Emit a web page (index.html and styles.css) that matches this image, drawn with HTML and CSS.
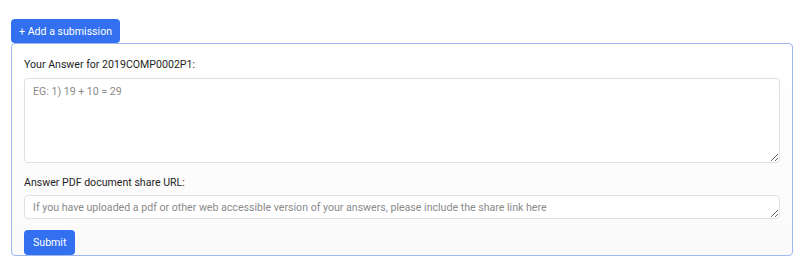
FILE: index.html
```html
<!DOCTYPE html>
<html lang="en">
<head>
  <meta charset="UTF-8">
  <title>Submission</title>
  <link rel="stylesheet" href="styles.css">
</head>
<body>
  <button class="add-btn" id="addBtn">+ Add a submission</button>

  <form class="submission-card" id="submissionForm">
    <div class="form-row">
      <label for="answer">Your Answer for 2019COMP0002P1:</label>
      <textarea id="answer" class="answer-box" placeholder="EG: 1) 19 + 10 = 29"></textarea>
    </div>

    <div class="form-row">
      <label for="shareUrl">Answer PDF document share URL:</label>
      <textarea id="shareUrl" class="url-box" placeholder="If you have uploaded a pdf or other web accessible version of your answers, please include the share link here"></textarea>
    </div>

    <button type="submit" class="submit-btn">Submit</button>
  </form>
</body>
</html>
```

FILE: styles.css
```css
/* page */
body {
  margin: 0;
  padding: 19px 13px 0 11px;
  font-family: Roboto, "Liberation Sans", Arial, sans-serif;
  font-size: 10.6px;
  color: #1e1e1e;
  background-color: #fff;
}
.add-btn {
  display: block;
  height: 24px;
  padding: 0 8px;
  font-family: inherit;
  font-size: 10.6px;
  color: #fff;
  background-color: #3270f0;
  border: none;
  border-radius: 4px;
  cursor: pointer;
}
.submission-card {
  margin: 0;
  padding: 13px 12px 0 12px;
  border: 1px solid #9db8f2;
  border-radius: 4px;
  background: linear-gradient(#fff, #fafafa);
}
.form-row {
  margin-bottom: 12px;
}
.form-row:nth-child(2) {
  margin-bottom: 11px;
}
.form-row label {
  display: block;
  line-height: 16px;
  margin-bottom: 5px;
}
.form-row:nth-child(2) label {
  margin-bottom: 4px;
}
textarea {
  display: block;
  box-sizing: border-box;
  width: 100%;
  padding: 6px 8px;
  font-family: inherit;
  font-size: 10.6px;
  color: #333;
  background-color: #fff;
  border: 1px solid #e0e0e0;
  border-radius: 4px;
}
textarea::placeholder {
  color: #8a8a8a;
}
.answer-box {
  height: 85px;
}
.url-box {
  height: 24px;
  padding-top: 5px;
  overflow: hidden;
}
.submit-btn {
  display: block;
  height: 25px;
  padding: 0 9px;
  font-family: inherit;
  font-size: 10.6px;
  color: #fff;
  background-color: #3270f0;
  border: none;
  border-radius: 4px;
  cursor: pointer;
}
```
